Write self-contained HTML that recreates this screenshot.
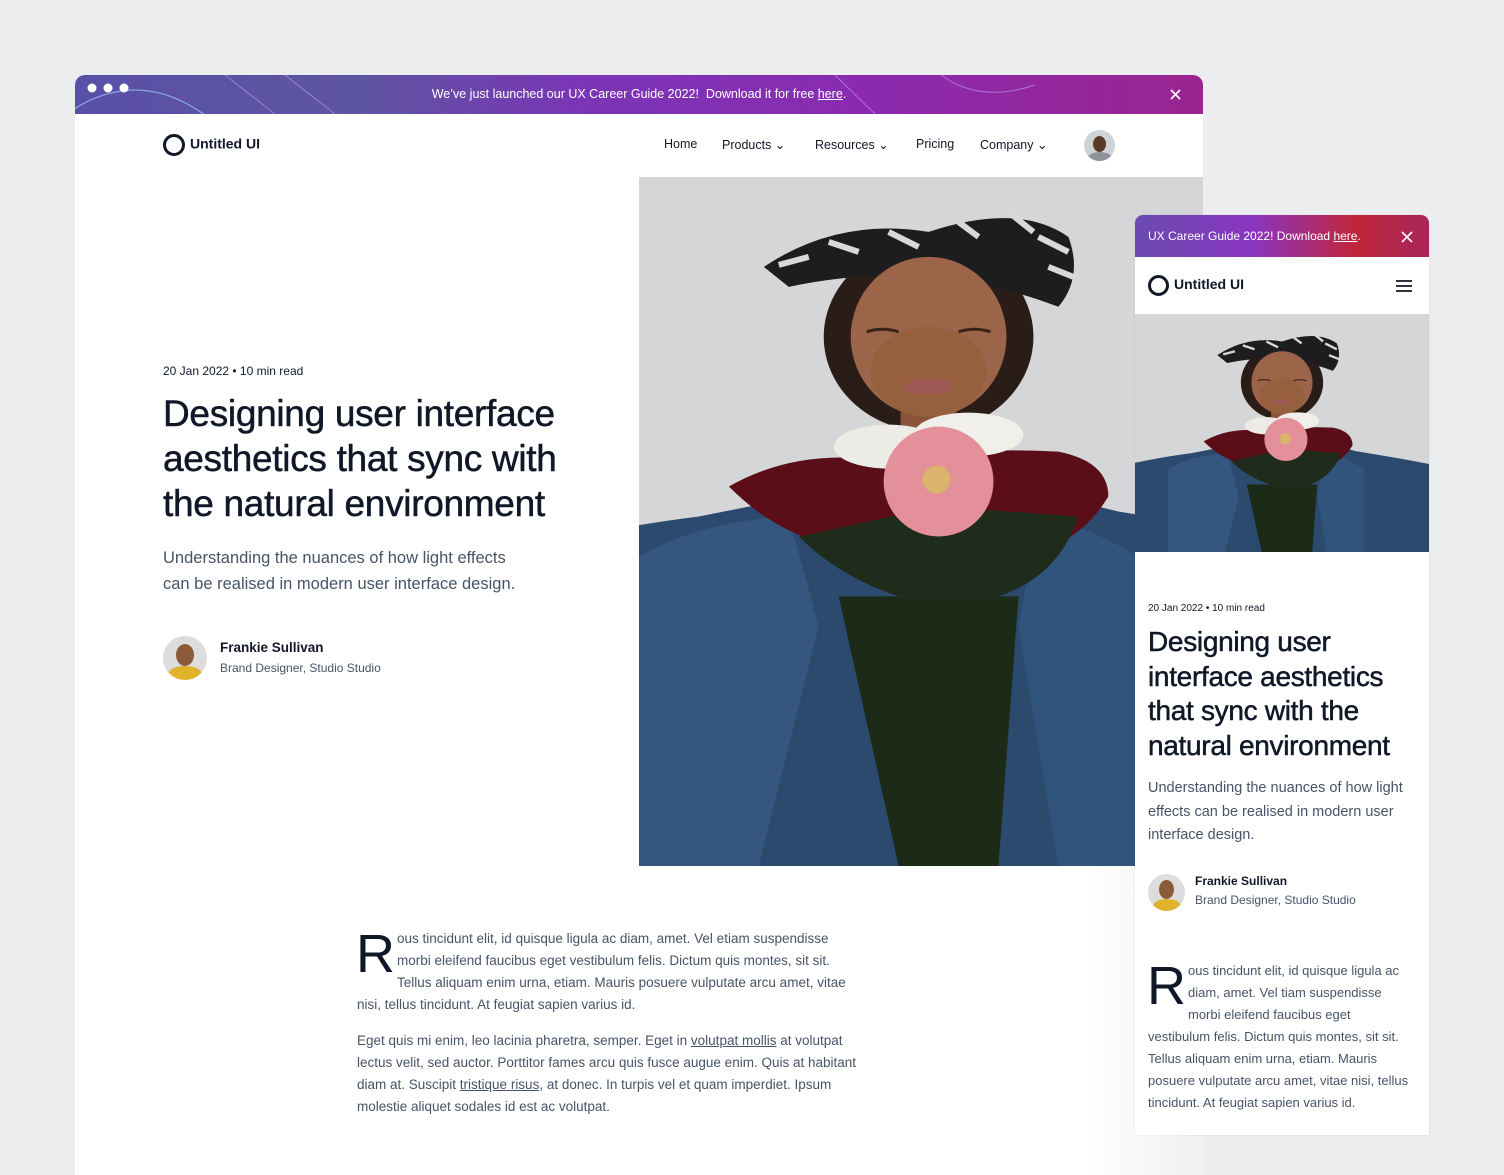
<!DOCTYPE html>
<html><head><meta charset="utf-8"><style>
*{margin:0;padding:0;box-sizing:border-box}
body{width:1504px;height:1128px;overflow:hidden;background:#ecedef;font-family:"Liberation Sans",sans-serif;color:#101828;position:relative}
.abs{position:absolute}
.win{left:75px;top:75px;width:1128px;height:1100px;background:#fff;border-radius:10px 10px 0 0;overflow:hidden}
.banner{left:0;top:0;width:1128px;height:39px;background:linear-gradient(90deg,#5a4fa8 0%,#5e55a0 25%,#7a35b5 45%,#8b2ab0 70%,#9a2590 100%);color:#fff;font-size:12.5px;text-align:center;line-height:39px}
.nav{font-size:12.5px;color:#101828}
.logo{font-size:14px;font-weight:700;color:#101828}
.ring{display:inline-block;border:3px solid #101828;border-radius:50%}
h1{font-weight:400;font-size:37px;line-height:45px;letter-spacing:-0.3px;-webkit-text-stroke:0.5px #101828}
.sub{color:#475467;font-size:16.5px;line-height:26px}
.body{color:#475467;font-size:13.5px;line-height:22px}
.body a{color:#475467;text-decoration:underline}
.cap{float:left;font-size:54px;line-height:42px;color:#101828;margin:5px 2px 0 -1px;height:44px}
</style></head><body>
<svg width="0" height="0" style="position:absolute"><defs>
<g id="photo">
<rect x="-300" y="-200" width="1200" height="1100" fill="#d5d6d7"/>
<path d="M-300 900 L-300 420 Q-100 360 60 340 Q160 320 220 310 L360 310 Q420 320 480 335 Q700 370 900 420 L900 900Z" fill="#2b4a6e"/>
<path d="M0 690 L0 380 Q60 345 150 340 L180 450 L120 690Z" fill="#35577f"/>
<path d="M500 690 L500 380 Q440 345 400 340 L380 450 L420 690Z" fill="#31547c"/>
<ellipse cx="290" cy="160" rx="105" ry="95" fill="#2a1d17"/>
<path d="M125 90 Q200 40 290 55 Q380 25 430 60 Q445 100 420 130 Q290 80 150 110 Z" fill="#1d1d20"/>
<path d="M140 88 L170 80 M190 65 L220 75 M250 55 L280 70 M320 45 L340 60 M370 35 L395 55 M400 60 L430 75 M410 90 L435 100" stroke="#d8d8d8" stroke-width="6"/>
<rect x="262" y="210" width="56" height="60" fill="#8a533a"/>
<ellipse cx="290" cy="160" rx="78" ry="80" fill="#9c6448"/>
<ellipse cx="290" cy="195" rx="58" ry="45" fill="#96603f"/>
<path d="M228 155 Q244 150 260 155 M320 155 Q336 150 352 155" stroke="#3a2318" stroke-width="3" fill="none"/>
<ellipse cx="290" cy="210" rx="24" ry="8" fill="#a05a55"/>
<path d="M200 420 L380 420 L360 690 L260 690Z" fill="#1c2a18"/>
<path d="M90 310 Q160 270 250 285 Q330 270 420 275 Q470 285 470 320 Q440 370 380 380 Q330 340 300 380 Q240 350 200 370 Q140 360 90 310Z" fill="#5b0e18"/>
<path d="M160 360 Q200 400 260 420 L360 420 Q420 400 440 340 L300 330Z" fill="#1f2c1b"/>
<ellipse cx="250" cy="270" rx="55" ry="22" fill="#ecebe6"/>
<ellipse cx="330" cy="258" rx="55" ry="22" fill="#f0efea"/>
<circle cx="300" cy="305" r="55" fill="#e3909a"/>
<circle cx="298" cy="303" r="14" fill="#d9b46a"/>
</g>
</defs></svg>

<div class="abs win">
 <div class="abs banner">We’ve just launched our UX Career Guide 2022! &nbsp;Download it for free <u>here</u>.
  <svg class="abs" style="left:0;top:0" width="1128" height="39"><path d="M-10 40 Q60 -10 130 40" stroke="#86a8e0" fill="none" stroke-width="1.3"/><path d="M150 0 L200 39 M210 0 L260 39 M760 0 L800 39 M860 -5 Q900 30 960 10" stroke="#c3a3f0" fill="none" opacity=".6"/><circle cx="17" cy="13" r="4.5" fill="#fff"/><circle cx="33" cy="13" r="4.5" fill="#fff"/><circle cx="49" cy="13" r="4.5" fill="#fff"/><path d="M1096 15 l9 9 M1105 15 l-9 9" stroke="#fff" stroke-width="1.6"/></svg>
 </div>
 <div class="abs logo" style="left:88px;top:59px"><span class="ring" style="width:22px;height:22px;vertical-align:middle;margin-right:5px"></span>Untitled UI</div>
 <div class="abs nav" style="left:589px;top:62px">Home</div>
 <div class="abs nav" style="left:647px;top:62px">Products ⌄</div>
 <div class="abs nav" style="left:740px;top:62px">Resources ⌄</div>
 <div class="abs nav" style="left:841px;top:62px">Pricing</div>
 <div class="abs nav" style="left:905px;top:62px">Company ⌄</div>
 <div class="abs" style="left:1009px;top:55px;width:31px;height:31px;border-radius:50%;background:#cfd2d6;overflow:hidden"><div style="margin:6px auto 0;width:13px;height:16px;border-radius:50%;background:#5a3a28"></div><div style="margin:0 auto;width:24px;height:12px;border-radius:50% 50% 0 0;background:#8e9498"></div></div>
 <svg class="abs" style="left:564px;top:102px" width="564" height="689" viewBox="0 0 565 690" preserveAspectRatio="xMinYMin slice"><use href="#photo"/></svg>
 <div class="abs" style="left:88px;top:289px;font-size:12px;color:#101828">20 Jan 2022 • 10 min read</div>
 <h1 class="abs" style="left:88px;top:316px;width:440px">Designing user interface aesthetics that sync with the natural environment</h1>
 <div class="abs sub" style="left:88px;top:470px;width:365px">Understanding the nuances of how light effects can be realised in modern user interface design.</div>
 <div class="abs" style="left:88px;top:561px;width:44px;height:44px;border-radius:50%;background:#ddd;overflow:hidden"><div style="margin:8px auto 0;width:18px;height:22px;border-radius:50%;background:#8a5a3a"></div><div style="margin:0 auto;width:34px;height:16px;border-radius:50% 50% 0 0;background:#e0b32a"></div></div>
 <div class="abs" style="left:145px;top:565px;font-size:13.5px;font-weight:700">Frankie Sullivan</div>
 <div class="abs" style="left:145px;top:586px;font-size:12px;color:#475467">Brand Designer, Studio Studio</div>
 <div class="abs body" style="left:282px;top:853px;width:500px"><span class="cap">R</span>ous tincidunt elit, id quisque ligula ac diam, amet. Vel etiam suspendisse morbi eleifend faucibus eget vestibulum felis. Dictum quis montes, sit sit. Tellus aliquam enim urna, etiam. Mauris posuere vulputate arcu amet, vitae nisi, tellus tincidunt. At feugiat sapien varius id.</div>
 <div class="abs body" style="left:282px;top:955px;width:520px">Eget quis mi enim, leo lacinia pharetra, semper. Eget in <a>volutpat mollis</a> at volutpat lectus velit, sed auctor. Porttitor fames arcu quis fusce augue enim. Quis at habitant diam at. Suscipit <a>tristique risus</a>, at donec. In turpis vel et quam imperdiet. Ipsum molestie aliquet sodales id est ac volutpat.</div>
 <div class="abs" style="left:1010px;top:791px;width:118px;height:320px;background:linear-gradient(90deg,#fff,#eef0f2)"></div>
</div>

<div class="abs" style="left:1135px;top:215px;width:294px;height:920px;background:#fff;border-radius:8px 8px 0 0;overflow:hidden;box-shadow:0 0 2px rgba(0,0,0,.08)">
 <div class="abs" style="left:0;top:0;width:294px;height:42px;background:linear-gradient(90deg,#6a4bb0,#8a35c0 40%,#c0263a 75%,#a8255a);color:#fff;font-size:12px;line-height:42px;padding-left:13px">UX Career Guide 2022! Download <u>here</u>.
  <svg class="abs" style="left:266px;top:16px" width="12" height="12"><path d="M1 1 l10 10 M11 1 l-10 10" stroke="#fff" stroke-width="1.6"/></svg></div>
 <div class="abs logo" style="left:13px;top:60px"><span class="ring" style="width:21px;height:21px;vertical-align:middle;margin-right:5px"></span>Untitled UI</div>
 <svg class="abs" style="left:260px;top:64px" width="18" height="14"><path d="M1 2 h16 M1 7 h16 M1 12 h16" stroke="#101828" stroke-width="1.8"/></svg>
 <svg class="abs" style="left:0;top:99px" width="294" height="238" viewBox="-85 -15 750 610" preserveAspectRatio="xMidYMin slice"><use href="#photo"/></svg>
 <div class="abs" style="left:13px;top:388px;font-size:10px">20 Jan 2022 • 10 min read</div>
 <h1 class="abs" style="left:13px;top:410px;width:275px;font-size:28px;line-height:34.5px">Designing user interface aesthetics that sync with the natural environment</h1>
 <div class="abs sub" style="left:13px;top:562px;width:262px;font-size:14.5px;line-height:23.5px">Understanding the nuances of how light effects can be realised in modern user interface design.</div>
 <div class="abs" style="left:13px;top:659px;width:37px;height:37px;border-radius:50%;background:#ddd;overflow:hidden"><div style="margin:6px auto 0;width:15px;height:19px;border-radius:50%;background:#8a5a3a"></div><div style="margin:0 auto;width:28px;height:14px;border-radius:50% 50% 0 0;background:#e0b32a"></div></div>
 <div class="abs" style="left:60px;top:659px;font-size:12px;font-weight:700">Frankie Sullivan</div>
 <div class="abs" style="left:60px;top:678px;font-size:12px;color:#475467">Brand Designer, Studio Studio</div>
 <div class="abs body" style="left:13px;top:745px;width:262px;font-size:13px"><span class="cap">R</span>ous tincidunt elit, id quisque ligula ac diam, amet. Vel tiam suspendisse morbi eleifend faucibus eget vestibulum felis. Dictum quis montes, sit sit. Tellus aliquam enim urna, etiam. Mauris posuere vulputate arcu amet, vitae nisi, tellus tincidunt. At feugiat sapien varius id.</div>
</div>
</body></html>
